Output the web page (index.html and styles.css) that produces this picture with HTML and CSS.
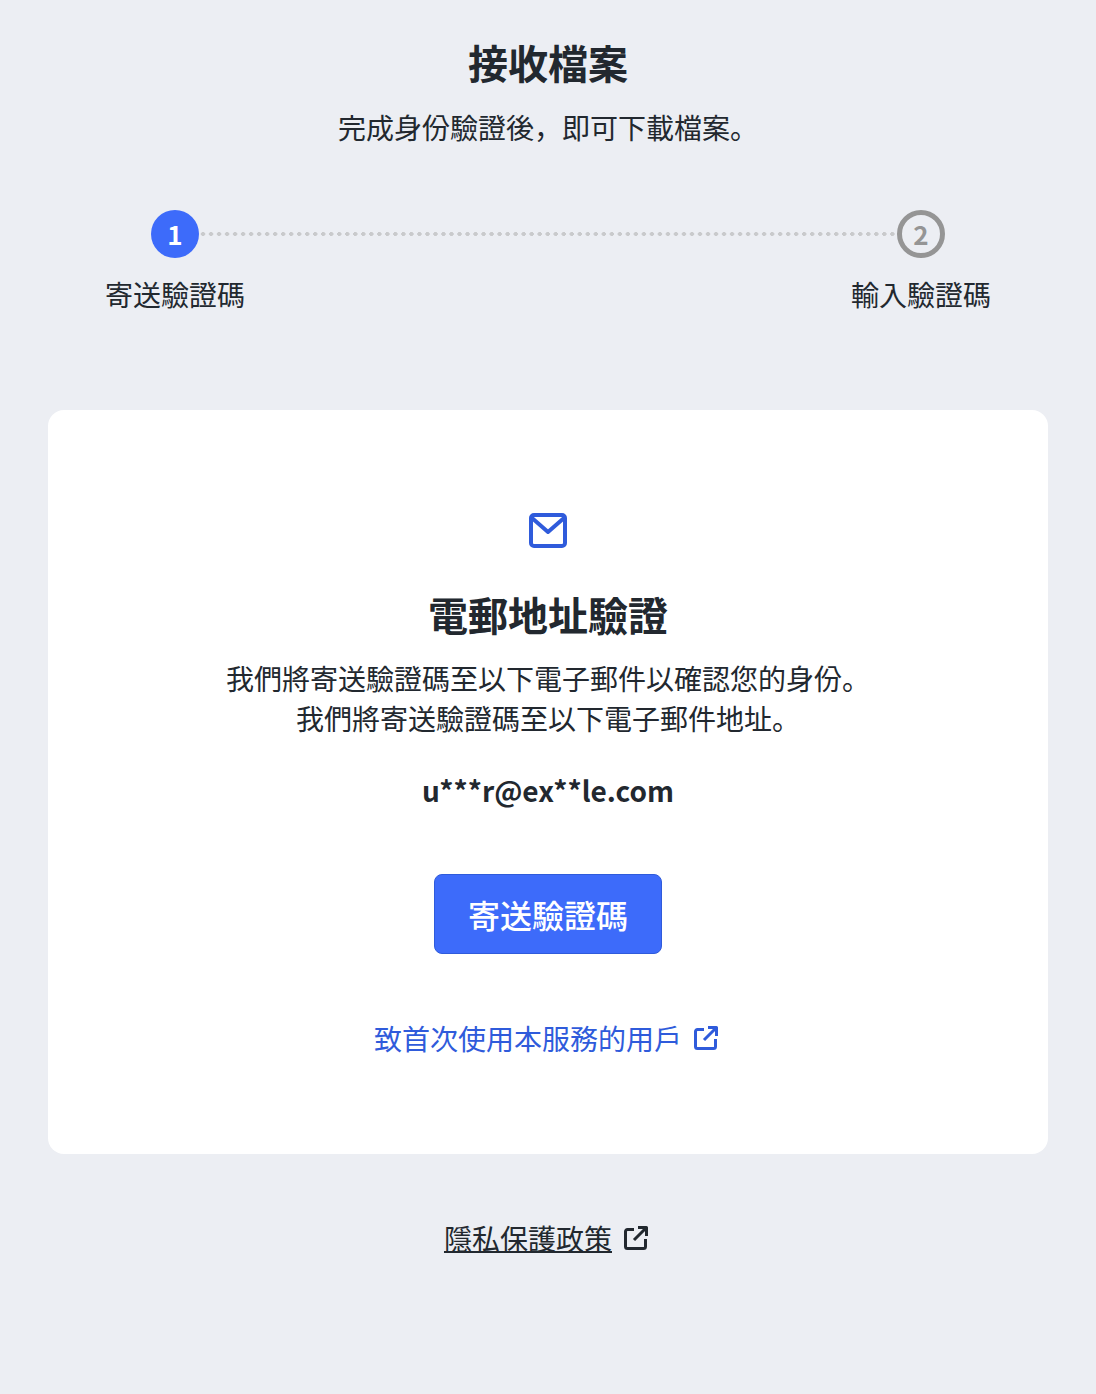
FILE: index.html
```html
<!DOCTYPE html>
<html lang="ja">
<head>
    <meta charset="utf-8">
    <title>接收檔案</title>
    <link rel="stylesheet" href="styles.css">
</head>
<body>
    <header class="head">
        <h1>接收檔案</h1>
        <p>完成身份驗證後，即可下載檔案。</p>
    </header>

    <ol class="steps">
        <li class="step active">
            <span class="num">1</span>
            <span class="label">寄送驗證碼</span>
        </li>
        <li class="line"></li>
        <li class="step">
            <span class="num">2</span>
            <span class="label">輸入驗證碼</span>
        </li>
    </ol>

    <main class="card">
        <svg class="mail" width="40" height="36" viewBox="0 0 40 36" fill="none" stroke="#2f5bdb" stroke-width="4" stroke-linejoin="round">
            <rect x="3" y="3" width="34" height="31" rx="3"/>
            <path d="M4 6 L20 20 L36 6"/>
        </svg>
        <h2>電郵地址驗證</h2>
        <p class="desc">我們將寄送驗證碼至以下電子郵件以確認您的身份。<br>我們將寄送驗證碼至以下電子郵件地址。</p>
        <p class="email">u***r@ex**le.com</p>
        <button type="button" class="send">寄送驗證碼</button>
        <a class="first" href="#">
            <span>致首次使用本服務的用戶</span>
            <svg width="24" height="24" viewBox="0 0 24 24" fill="none" stroke="currentColor" stroke-width="3" stroke-linejoin="round">
                <path d="M10 3.5 H3.5 a2 2 0 0 0 -2 2 V20.5 a2 2 0 0 0 2 2 H19.5 a2 2 0 0 0 2 -2 V13"/>
                <path d="M10 14 L22.5 1.5 M14 1.5 H22.5 V10"/>
            </svg>
        </a>
    </main>

    <footer class="foot">
        <a href="#">
            <span class="under">隱私保護政策</span>
            <svg width="24" height="24" viewBox="0 0 24 24" fill="none" stroke="currentColor" stroke-width="3" stroke-linejoin="round">
                <path d="M10 3.5 H3.5 a2 2 0 0 0 -2 2 V20.5 a2 2 0 0 0 2 2 H19.5 a2 2 0 0 0 2 -2 V13"/>
                <path d="M10 14 L22.5 1.5 M14 1.5 H22.5 V10"/>
            </svg>
        </a>
    </footer>
</body>
</html>
```

FILE: styles.css
```css
* { box-sizing: border-box; }
html, body { margin: 0; }
body { height: 1394px; overflow: hidden; background-color: #eceef3; color: #22282f; font-family: "Noto Sans CJK JP", "Noto Sans", sans-serif; font-size: 28px; line-height: 40px; padding: 30px 48px 0; }
.head { text-align: center; }
.head h1 { margin: 0; font-size: 40px; line-height: 64px; font-weight: 700; }
.head p { margin: 1px 0 0; line-height: 64px; }
.steps { list-style: none; margin: 51px 0 0; padding: 0 50px; display: flex; align-items: flex-start; height: 120px; }
.step { width: 154px; flex: none; display: flex; flex-direction: column; align-items: center; white-space: nowrap; }
.num { width: 48px; height: 48px; border-radius: 50%; display: flex; align-items: center; justify-content: center; background-color: #3d6bfa; color: #fff; font-size: 26px; font-weight: 700; }
.step:not(.active) .num { background: none; border: 5px solid #959595; color: #959595; }
.label { margin-top: 16px; }
.line { flex: 1; height: 4px; margin: 22px -53px 0 -53px; background-image: radial-gradient(circle, #c9cacc 1.9px, transparent 2px); background-size: 8px 4px; background-repeat: round; }
.card { margin-top: 80px; height: 744px; background-color: #fff; border-radius: 16px; display: flex; flex-direction: column; align-items: center; padding-top: 102px; text-align: center; }
.mail { display: block; }
.card h2 { margin: 34px 0 0; font-size: 40px; line-height: 64px; font-weight: 700; }
.desc { margin: 12px 0 0; }
.email { margin: 32px 0 0; font-size: 28px; font-weight: 700; }
.send { margin-top: 64px; width: 228px; height: 80px; border: 1px solid #2f5bdb; border-radius: 8px; background-color: #3d6bfa; color: #fff; font: inherit; font-size: 32px; font-weight: 500; padding: 0; cursor: pointer; }
.first { margin-top: 64px; padding-right: 4px; display: flex; align-items: center; gap: 12px; color: #2f5bdb; text-decoration: none; }
.foot { margin-top: 64px; display: flex; justify-content: center; }
.foot a { padding-right: 4px; display: flex; align-items: center; gap: 12px; color: #22282f; text-decoration: none; }
.under { text-decoration: underline; text-decoration-thickness: 2px; }
```
